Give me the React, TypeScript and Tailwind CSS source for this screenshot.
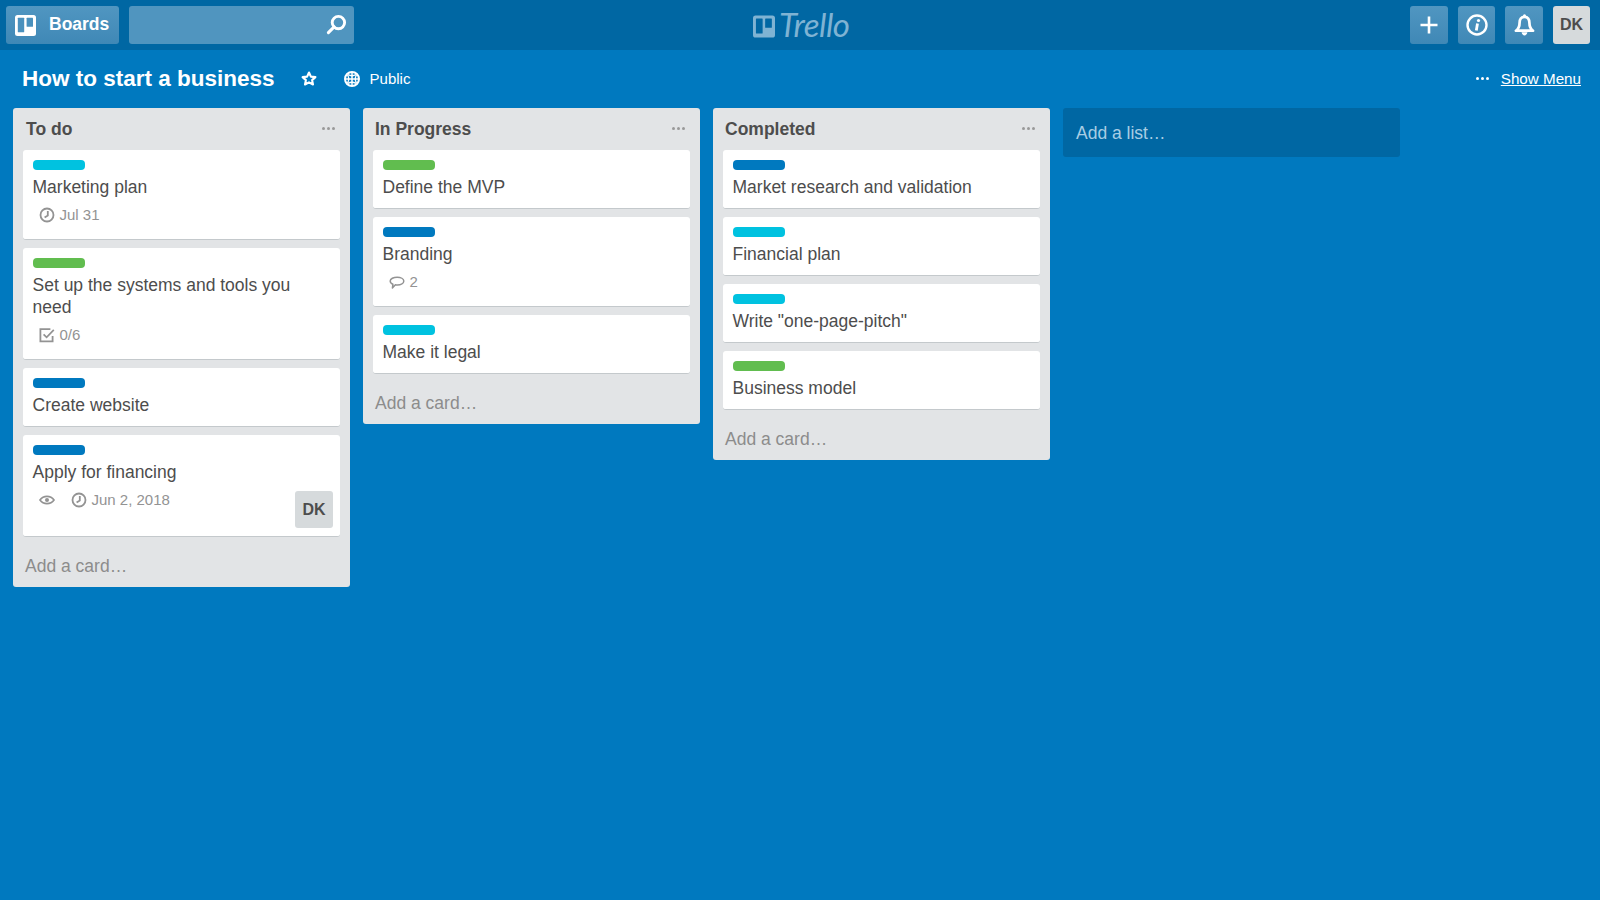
import React from "react";

const F = "font-['Liberation_Sans',Arial,sans-serif]";

function BoardsGlyph({ className, fill, cut }: { className?: string; fill: string; cut: string }) {
  return (
    <svg viewBox="0 0 21 21" className={className}>
      <rect x="0" y="0" width="21" height="21" rx="2.5" fill={fill} />
      <rect x="2.8" y="2.8" width="6.4" height="14.5" rx="0.5" fill={cut} />
      <rect x="11.600" y="2.800" width="6.400" height="9" rx="0.5" fill={cut} />
    </svg>
  );
}

function Clock() {
  return (
    <svg viewBox="0 0 16 16" className="w-4 h-4 shrink-0" fill="none" stroke="#939393" strokeWidth="1.8">
      <circle cx="8" cy="8" r="6.5" />
      <path d="M8.800 4v4.600L5.600 10.600" />
    </svg>
  );
}
function Check() {
  return (
    <svg viewBox="0 0 16 16" className="w-4 h-4 shrink-0" fill="none" stroke="#939393" strokeWidth="1.8">
      <path d="M13.600 9v5.400H1.400V2.200h10" />
      <path d="M4.600 7.400l3 3L14.800 2.800" strokeWidth="1.700" />
    </svg>
  );
}
function Comment() {
  return (
    <svg viewBox="0 0 16 16" className="w-4 h-4 shrink-0" fill="none" stroke="#939393" strokeWidth="1.500">
      <path d="M8.200 3.200c3.600 0 6.600 1.600 6.600 3.900s-3 3.900-6.400 3.900c-.7 0-1.400-.1-2-.2L3.400 14l.5-3.700C2.200 9.600 1.200 8.500 1.200 7.100c0-2.300 3.400-3.900 7-3.900z" strokeLinejoin="round" />
    </svg>
  );
}
function Eye() {
  return (
    <svg viewBox="0 0 16 16" className="w-4 h-4 shrink-0" fill="none" stroke="#939393" strokeWidth="1.700">
      <path d="M1 8c1.800-2.500 4.200-3.600 7-3.600S13.200 5.500 15 8c-1.800 2.500-4.200 3.600-7 3.600S2.800 10.500 1 8z" />
      <circle cx="8" cy="8" r="2" fill="#939393" stroke="none" />
    </svg>
  );
}

function Dots({ className }: { className: string }) {
  return (
    <span className={"flex gap-[2px] " + className}>
      <i className="block w-[3px] h-[3px] rounded-full bg-current" />
      <i className="block w-[3px] h-[3px] rounded-full bg-current" />
      <i className="block w-[3px] h-[3px] rounded-full bg-current" />
    </span>
  );
}

type CardT = {
  label: string;
  title: React.ReactNode;
  badges?: React.ReactNode;
  avatar?: boolean;
};

const CYAN = "bg-[#00c2e0]";
const GREEN = "bg-[#61bd4f]";
const BLUE = "bg-[#0079bf]";

function Badge({ icon, text }: { icon: React.ReactNode; text?: string }) {
  return (
    <span className="flex items-center gap-[5px] text-[15px] leading-[20px] text-[#939393]">
      <span className="flex w-4 justify-center">{icon}</span>
      {text && <span>{text}</span>}
    </span>
  );
}

function Card({ label, title, badges, avatar }: CardT) {
  return (
    <div className="relative bg-white rounded-[3px] border-b border-[#c4c9cc] pt-[10px] pl-[9.500px] pr-[10px] pb-[10px] mb-2">
      <div className="pl-[0.500px]">
        <div className={"w-[52px] h-[10px] rounded-[4px] " + label} />
      </div>
      <div className="mt-[6px] text-[17.500px] leading-[22px] text-[#4d4d4d]">{title}</div>
      {badges && (
        <div className={"flex items-center gap-[16px] pl-[6px] mt-[7px] h-[20px] " + (avatar ? "mb-[16px]" : "mb-[4px]")}>{badges}</div>
      )}
      {avatar && (
        <div className="absolute right-[7px] bottom-[8px] w-[38px] h-[37px] rounded-[3px] bg-[#d6dadc] flex items-center justify-center text-[16px] font-bold text-[#4d4d4d]">
          DK
        </div>
      )}
    </div>
  );
}

function List({ title, cards, tx }: { title: string; cards: CardT[]; tx: string }) {
  return (
    <div className="w-[337px] shrink-0 self-start bg-[#e2e4e6] rounded-[3px]">
      <div className="flex items-center justify-between h-[42px] pr-[15px]">
        <span className={"text-[17.500px] font-bold text-[#4d4d4d] " + tx}>{title}</span>
        <Dots className="text-[#999999] mb-[1px]" />
      </div>
      <div className="px-[10px]">
        {cards.map((c, i) => (
          <Card key={i} {...c} />
        ))}
      </div>
      <div className="h-[42px] pl-[12px] flex items-start pt-[10px] text-[17.500px] leading-[22px] text-[#8c8c8c]">Add a card…</div>
    </div>
  );
}

const navBtn = "h-[38px] rounded-[3px] bg-gradient-to-b from-[#5096c1] to-[#3f88b6] flex items-center justify-center";

export default function App() {
  return (
    <div className={"w-[1600px] h-[900px] overflow-hidden bg-[#0079bf] " + F}>
      <header className="relative h-[50px] bg-[#0067a3] flex items-center justify-between pl-[6px] pr-[10px]">
        <div className="flex items-center gap-[10px]">
          <div className={navBtn + " w-[113px] gap-[13px] justify-start pl-[9px]"}>
            <BoardsGlyph className="w-[21px] h-[21px]" fill="#ffffff" cut="#4a91bd" />
            <span className="text-[17.500px] font-bold text-white pb-[1px]">Boards</span>
          </div>
          <div className="w-[225px] h-[38px] rounded-[3px] bg-[#5095bf] flex items-center justify-end pr-[7px]">
            <svg viewBox="0 0 22 22" className="w-[21px] h-[21px] -translate-y-[1px]" fill="none" stroke="#fff" strokeWidth="3">
              <circle cx="13" cy="9" r="6.500" />
              <path d="M8.500 13.500L2.500 19.500" strokeLinecap="round" strokeWidth="3.200" />
            </svg>
          </div>
        </div>
        <div className="absolute left-[753px] top-[13px] flex items-center gap-[4px]">
          <BoardsGlyph className="w-[22px] h-[23px]" fill="#7fb3d3" cut="#0067a3" />
          <span className="font-['Lato',sans-serif] italic text-[33px] leading-[26px] tracking-[-0.500px] text-[#7fb3d3] -translate-y-[2px]">Trello</span>
        </div>
        <div className="flex items-center gap-[10px]">
          <div className={navBtn + " w-[38px]"}>
            <svg viewBox="0 0 20 20" className="w-[20px] h-[20px]" stroke="#fff" strokeWidth="2.600">
              <path d="M10 1.500v17M1.500 10h17" />
            </svg>
          </div>
          <div className={navBtn + " w-[37px]"}>
            <svg viewBox="0 0 22 22" className="w-[22px] h-[22px]" fill="none" stroke="#fff" strokeWidth="2.400">
              <circle cx="11" cy="11" r="9.500" />
              <circle cx="12.500" cy="6.500" r="1.600" fill="#fff" stroke="none" />
              <path d="M11.500 9.500l-1.200 7" strokeWidth="2.800" />
            </svg>
          </div>
          <div className={navBtn + " w-[38px]"}>
            <svg viewBox="0 0 20 22" className="w-[21px] h-[23px]" fill="none" stroke="#fff" strokeWidth="2.600">
              <path d="M10 2.800c-3.300 0-4.700 2.500-4.700 5.500 0 3.500-.8 5.700-3.500 7.700h16.400c-2.700-2-3.500-4.200-3.500-7.700 0-3-1.400-5.500-4.700-5.500z" strokeLinejoin="round" />
              <path d="M7.200 17.500c.3 1.800 1.500 3 2.800 3s2.500-1.200 2.800-3" fill="#fff" stroke="none" />
              <circle cx="10" cy="1.800" r="1.500" fill="#fff" stroke="none" />
            </svg>
          </div>
          <div className="w-[37px] h-[38px] rounded-[3px] bg-[#d6dadc] flex items-center justify-center text-[16px] font-bold text-[#4d4d4d]">DK</div>
        </div>
      </header>

      <div className="h-[58px] flex items-center pl-[22px] pr-[19px] text-white">
        <span className="text-[22.500px] font-bold">How to start a business</span>
        <svg viewBox="0 0 16 16" className="w-4 h-4 ml-[26px]" fill="none" stroke="#fff" strokeWidth="2.100">
          <path d="M8 1.500l1.900 4.100 4.500.5-3.300 3 .9 4.400L8 11.300l-4 2.200.9-4.400-3.300-3 4.500-.5z" strokeLinejoin="round" />
        </svg>
        <svg viewBox="0 0 16 16" className="w-4 h-4 ml-[27px]" fill="none" stroke="#fff" strokeWidth="2">
          <circle cx="8" cy="8" r="7" />
          <path d="M8 1v14M1 8h14" strokeWidth="1.500" />
          <path d="M4 3.500q4 2.500 8 0M4 12.500q4-2.500 8 0M3.500 4q2.500 4 0 8M12.500 4q-2.500 4 0 8" strokeWidth="1.300" />
        </svg>
        <span className="ml-[10px] text-[15px]">Public</span>
        <span className="ml-auto flex items-center gap-[12px]">
          <Dots className="text-white" />
          <span className="text-[15.200px] underline">Show Menu</span>
        </span>
      </div>

      <div className="flex items-start gap-[13px] pl-[13px]">
        <List
          title="To do"
          tx="pl-[13px]"
          cards={[
            { label: CYAN, title: "Marketing plan", badges: <Badge icon={<Clock />} text="Jul 31" /> },
            { label: GREEN, title: "Set up the systems and tools you need", badges: <Badge icon={<Check />} text="0/6" /> },
            { label: BLUE, title: "Create website" },
            {
              label: BLUE,
              title: "Apply for financing",
              avatar: true,
              badges: (
                <>
                  <Badge icon={<Eye />} />
                  <Badge icon={<Clock />} text="Jun 2, 2018" />
                </>
              ),
            },
          ]}
        />
        <List
          title="In Progress"
          tx="pl-[12px]"
          cards={[
            { label: GREEN, title: "Define the MVP" },
            { label: BLUE, title: "Branding", badges: <Badge icon={<Comment />} text="2" /> },
            { label: CYAN, title: "Make it legal" },
          ]}
        />
        <List
          title="Completed"
          tx="pl-[12px]"
          cards={[
            { label: BLUE, title: "Market research and validation" },
            { label: CYAN, title: "Financial plan" },
            { label: CYAN, title: 'Write "one-page-pitch"' },
            { label: GREEN, title: "Business model" },
          ]}
        />
        <div className="w-[337px] h-[49px] rounded-[3px] bg-[#0067a3] flex items-center pl-[13px] pt-[1px] text-[17.500px] text-[#a8cde4]">Add a list…</div>
      </div>
    </div>
  );
}
